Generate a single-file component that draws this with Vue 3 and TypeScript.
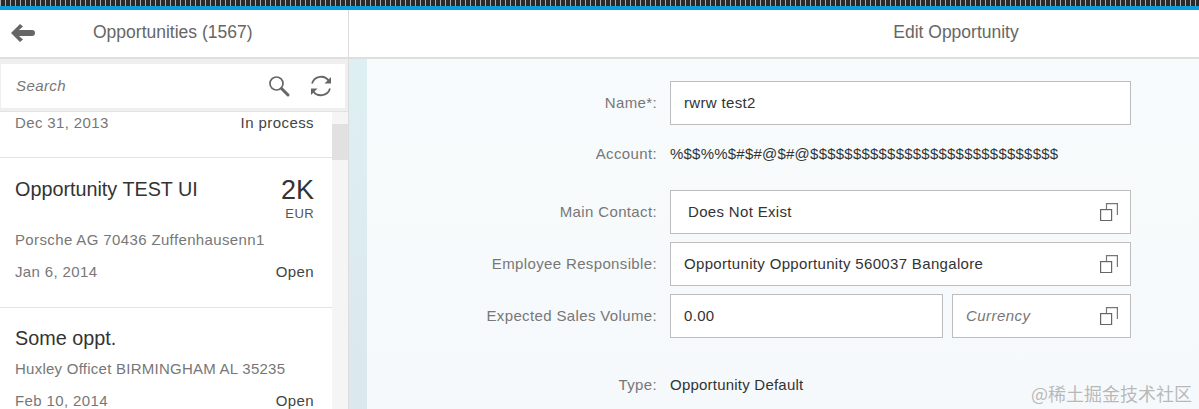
<script setup lang="ts">
const backPath = 'M0 9 L9 0 L12 2.5 L8 6 H21 a3 3 0 0 1 0 6 H8 L12 15.5 L9 18 Z'
</script>

<template>
  <div class="page">
    <div class="ticks"></div>
    <div class="accent"></div>
    <div class="main">
      <aside class="left">
        <header class="head left-head">
          <svg class="back" width="24" height="18" viewBox="0 0 24 18"><path :d="backPath" fill="#666" /></svg>
          <span class="head-title">Opportunities (1567)</span>
        </header>
        <div class="search-wrap">
          <div class="search">
            <span class="placeholder">Search</span>
            <svg class="icon-search" width="24" height="24" viewBox="0 0 24 24" fill="none" stroke="#666">
              <circle cx="9.5" cy="9.5" r="6.5" stroke-width="1.7" />
              <path d="M14.5 14.5 L21 21" stroke-width="3" stroke-linecap="round" />
            </svg>
            <svg class="icon-sync" width="24" height="24" viewBox="0 0 24 24" fill="none" stroke="#666" stroke-width="1.8">
              <path d="M3 9.5 A9.5 9.5 0 0 1 20 7" />
              <path d="M21 14.5 A9.5 9.5 0 0 1 4 17" />
              <path d="M22 3 L22 9.5 L15.5 9.5 Z" fill="#666" stroke="none" />
              <path d="M2 21 L2 14.5 L8.5 14.5 Z" fill="#666" stroke="none" />
            </svg>
          </div>
        </div>
        <div class="list-wrap">
          <div class="list">
            <div class="item first">
              <div class="row"><span class="muted">Dec 31, 2013</span><span class="status">In process</span></div>
            </div>
            <div class="item second">
              <div class="row top">
                <span class="title">Opportunity TEST UI</span>
                <div class="amount"><div class="num">2K</div><div class="cur">EUR</div></div>
              </div>
              <div class="muted sub">Porsche AG 70436 Zuffenhausenn1</div>
              <div class="row date"><span class="muted">Jan 6, 2014</span><span class="status">Open</span></div>
            </div>
            <div class="item third">
              <div class="title">Some oppt.</div>
              <div class="muted sub3">Huxley Officet BIRMINGHAM AL 35235</div>
              <div class="row date3"><span class="muted">Feb 10, 2014</span><span class="status">Open</span></div>
            </div>
          </div>
          <div class="scrollbar"><div class="thumb"></div></div>
        </div>
      </aside>
      <section class="right">
        <header class="head right-head"><span class="head-title">Edit Opportunity</span></header>
        <div class="content">
          <div class="stripe"></div>
          <form class="form">
            <label class="lab">Name*:</label>
            <div class="box"><span class="val">rwrw test2</span></div>

            <label class="lab acc">Account:</label>
            <div class="plain acc">%$$%%$#$#@$#@$$$$$$$$$$$$$$$$$$$$$$$$$$$$$</div>

            <label class="lab">Main Contact:</label>
            <div class="box"><span class="val indent">Does Not Exist</span>
              <svg class="lookup" width="18" height="18" viewBox="0 0 18 18" fill="none" stroke="#666" stroke-width="1.2"><rect x="0.6" y="6.6" width="11" height="11" /><path d="M6.5 6 V0.6 H17.4 V12" stroke="#777" /></svg>
            </div>

            <label class="lab">Employee Responsible:</label>
            <div class="box"><span class="val">Opportunity Opportunity 560037 Bangalore</span>
              <svg class="lookup" width="18" height="18" viewBox="0 0 18 18" fill="none" stroke="#666" stroke-width="1.2"><rect x="0.6" y="6.6" width="11" height="11" /><path d="M6.5 6 V0.6 H17.4 V12" stroke="#777" /></svg>
            </div>

            <label class="lab">Expected Sales Volume:</label>
            <div class="split">
              <div class="box"><span class="val">0.00</span></div>
              <div class="box"><span class="ph">Currency</span>
                <svg class="lookup" width="18" height="18" viewBox="0 0 18 18" fill="none" stroke="#666" stroke-width="1.2"><rect x="0.6" y="6.6" width="11" height="11" /><path d="M6.5 6 V0.6 H17.4 V12" stroke="#777" /></svg>
              </div>
            </div>

            <label class="lab type">Type:</label>
            <div class="plain type">Opportunity Default</div>
          </form>
        </div>
      </section>
    </div>
    <div class="watermark">@稀土掘金技术社区</div>
  </div>
</template>

<style>
html, body { margin: 0; overflow: hidden; background: #fff; }
</style>

<style scoped>
.page { position: relative; width: 1199px; height: 409px; overflow: hidden; font-family: "Liberation Sans", Arial, sans-serif; font-size: 15px; color: #333; }
.ticks { height: 6px; background: repeating-linear-gradient(90deg, #a8a8a8 0 1px, #2a2a2a 1px 5px); }
.accent { height: 4px; background: #0a9fdc; }
.main { display: flex; height: 399px; }
.left { width: 348px; flex: none; border-right: 1px solid #dcdcdc; display: flex; flex-direction: column; }
.right { flex: 1; display: flex; flex-direction: column; min-width: 0; }
.head { height: 45px; padding-bottom: 2px; flex: none; display: flex; align-items: center; border-bottom: 2px solid #dedede; background: #fff; font-size: 17.5px; color: #666; box-sizing: content-box; }
.left-head { padding-left: 11px; }
.back { flex: none; }
.left-head .head-title { margin-left: 58px; }
.right-head { justify-content: center; padding-left: 364px; }
.search-wrap { padding: 5px 3px 3px 1px; background: #efefef; border-bottom: 1px solid #e2e2e2; flex: none; }
.search { height: 44px; background: #fff; display: flex; align-items: center; padding: 0 12px 0 15px; }
.placeholder { flex: 1; font-style: italic; color: #777; letter-spacing: .4px; padding-bottom: 2px; }
.icon-search { margin-right: 18px; }
.list-wrap { flex: 1; display: flex; min-height: 0; }
.list { width: 332px; flex: none; background: #fff; }
.scrollbar { flex: 1; background: #f5f5f5; padding-top: 12px; }
.thumb { height: 36px; background: #e1e1e1; }
.item { padding: 0 18px 0 15px; border-bottom: 1px solid #e4e4e4; box-sizing: border-box; }
.first { height: 46px; padding-top: 2px; }
.second { height: 150px; padding-top: 19px; }
.third { height: 149px; padding-top: 18px; border-bottom: 0; }
.row { display: flex; justify-content: space-between; align-items: baseline; }
.row.top { align-items: flex-start; height: 44px; }
.muted { color: #777; letter-spacing: .37px; white-space: nowrap; }
.sub3 { letter-spacing: .25px; }
.status { color: #444; letter-spacing: .42px; }
.title { font-size: 19.8px; line-height: 24px; color: #333; }
.amount { text-align: right; margin-top: -1px; }
.num { font-size: 27px; line-height: 28px; color: #333; }
.cur { font-size: 13px; line-height: 14px; color: #555; letter-spacing: .4px; margin-top: 3px; }
.sub { margin-top: 10px; line-height: 17px; }
.date { margin-top: 15px; }
.sub3 { margin-top: 10px; line-height: 17px; }
.date3 { margin-top: 16px; line-height: 15px; }
.content { flex: 1; display: flex; background: linear-gradient(180deg, #f7fbfc, #f6f9fb); min-height: 0; }
.stripe { width: 18px; flex: none; background: linear-gradient(180deg, #deeff2, #dbe8ee); }
.form { flex: 1; display: grid; grid-template-columns: 290px 461px; column-gap: 13px; row-gap: 8px; padding-top: 22px; align-content: start; }
.lab { align-self: center; text-align: right; color: #777; letter-spacing: .36px; white-space: nowrap; padding-bottom: 2px; }
.box { position: relative; height: 44px; box-sizing: border-box; border: 1px solid #bdbdbd; background: #fff; display: flex; align-items: center; padding: 0 0 2px 13px; color: #333; letter-spacing: .33px; }
.val { color: #333; }
.indent { margin-left: 4px; }
.ph { font-style: italic; color: #777; letter-spacing: .45px; }
.plain { align-self: center; color: #333; letter-spacing: .22px; white-space: nowrap; }
.lookup { position: absolute; right: 12px; top: 12px; }
.split { display: flex; gap: 9px; }
.split .box:first-child { width: 273px; flex: none; }
.split .box:last-child { flex: 1; }
.acc { height: 42px; line-height: 42px; margin-bottom: 7px; padding-bottom: 0; }
.type { height: 44px; line-height: 44px; margin-top: 17px; padding-bottom: 0; }
.watermark { position: absolute; right: 7px; top: 383px; font-family: "Noto Sans CJK SC", sans-serif; font-size: 18px; line-height: 20px; color: rgba(120,120,120,.5); white-space: nowrap; }
</style>
